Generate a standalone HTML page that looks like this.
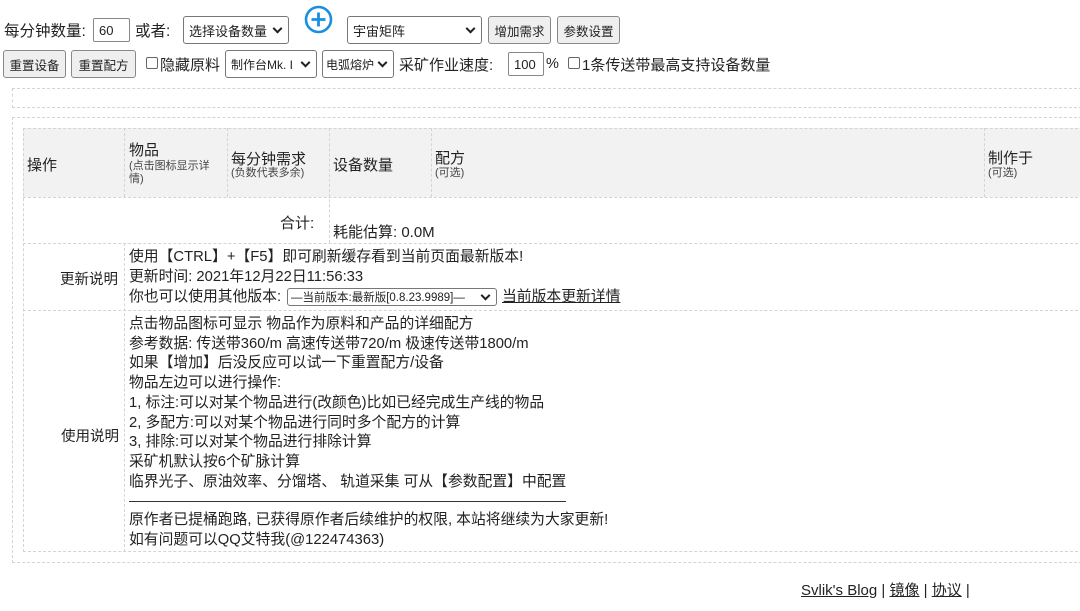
<!DOCTYPE html>
<html><head><meta charset="utf-8"><style>
*{box-sizing:border-box;margin:0;padding:0}
body{width:1080px;height:611px;overflow:hidden;background:#fff;font-family:"Liberation Sans","Noto Sans CJK SC",sans-serif;color:#222;font-size:14px;position:relative}
.a{position:absolute;white-space:nowrap}
.in{position:absolute;border:1px solid #888;border-radius:2px;background:#fff;font-size:13px;padding-left:5px;display:flex;align-items:center}
.sel{position:absolute;border:1px solid #777;border-radius:3px;background:#fff;font-size:13px;padding-left:5px;display:flex;align-items:center;overflow:hidden}
.sel:after{content:"";position:absolute;right:7px;top:50%;width:5px;height:5px;border-right:2px solid #222;border-bottom:2px solid #222;transform:translateY(-70%) rotate(45deg)}
.btn{position:absolute;border:1px solid #888;border-radius:3px;background:#efefef;font-size:12.5px;display:flex;align-items:center;justify-content:center}
.cb{position:absolute;width:12px;height:12px;border:1px solid #666;border-radius:2px;background:#fff}
.dash{position:absolute;border:1px dashed #d4d4d4}
.vl{position:absolute;border-left:1px dashed #d4d4d4}
.hl{position:absolute;border-top:1px dashed #d4d4d4}
.sm{font-size:11px;color:#444;line-height:13px}
.t{font-size:14.8px;line-height:19.7px}
</style></head><body>
<div class="a" style="left:4px;top:19px;font-size:15.5px">每分钟数量:</div>
<div class="in" style="left:93px;top:18px;width:37px;height:24px">60</div>
<div class="a" style="left:135px;top:19px;font-size:15.5px">或者:</div>
<div class="sel" style="left:183px;top:16px;width:106px;height:28px">选择设备数量</div>
<svg class="a" style="left:304px;top:5px" width="29" height="29" viewBox="0 0 29 29"><circle cx="14.5" cy="14.5" r="12.5" fill="none" stroke="#1a8fe0" stroke-width="2.6"/><path d="M14.5 7.5v14M7.5 14.5h14" stroke="#1a8fe0" stroke-width="2.8"/></svg>
<div class="sel" style="left:347px;top:16px;width:135px;height:28px">宇宙矩阵</div>
<div class="btn" style="left:488px;top:16px;width:63px;height:28px">增加需求</div>
<div class="btn" style="left:557px;top:16px;width:63px;height:28px">参数设置</div>

<div class="btn" style="left:3px;top:50px;width:63px;height:28px">重置设备</div>
<div class="btn" style="left:71px;top:50px;width:65px;height:28px">重置配方</div>
<div class="cb" style="left:146px;top:57px"></div>
<div class="a" style="left:160px;top:54px;font-size:15px">隐藏原料</div>
<div class="sel" style="left:225px;top:50px;width:92px;height:28px;font-size:12px">制作台Mk. I</div>
<div class="sel" style="left:322px;top:50px;width:72px;height:28px;padding-left:3px;font-size:12px">电弧熔炉</div>
<div class="a" style="left:399px;top:54px;font-size:15px">采矿作业速度:</div>
<div class="in" style="left:508px;top:52px;width:36px;height:24px">100</div>
<div class="a" style="left:546px;top:56px;font-size:14.5px">%</div>
<div class="cb" style="left:568px;top:57px"></div>
<div class="a" style="left:582px;top:54px;font-size:15px">1条传送带最高支持设备数量</div>

<div class="dash" style="left:12px;top:88px;width:1080px;height:20px"></div>
<div class="dash" style="left:12px;top:117px;width:1080px;height:446px"></div>
<div style="position:absolute;left:23px;top:128px;width:1070px;height:69px;background:#f2f2f2"></div>
<div class="dash" style="left:23px;top:128px;width:1070px;height:424px"></div>
<div class="hl" style="left:23px;top:197px;width:1060px"></div>
<div class="hl" style="left:23px;top:243px;width:1060px"></div>
<div class="hl" style="left:23px;top:310px;width:1060px"></div>
<div class="vl" style="left:124px;top:128px;height:69px"></div>
<div class="vl" style="left:227px;top:128px;height:69px"></div>
<div class="vl" style="left:329px;top:128px;height:115px"></div>
<div class="vl" style="left:431px;top:128px;height:69px"></div>
<div class="vl" style="left:984px;top:128px;height:69px"></div>
<div class="vl" style="left:124px;top:243px;height:309px"></div>

<div class="a" style="left:27px;top:154px;font-size:15px">操作</div>
<div class="a" style="left:129px;top:139px;font-size:15px">物品</div>
<div class="a sm" style="left:129px;top:160px;white-space:normal;width:88px">(点击图标显示详情)</div>
<div class="a" style="left:231px;top:148px;font-size:15px">每分钟需求</div>
<div class="a sm" style="left:231px;top:167px">(负数代表多余)</div>
<div class="a" style="left:333px;top:154px;font-size:15px">设备数量</div>
<div class="a" style="left:435px;top:147px;font-size:15px">配方</div>
<div class="a sm" style="left:435px;top:167px">(可选)</div>
<div class="a" style="left:988px;top:147px;font-size:15px">制作于</div>
<div class="a sm" style="left:988px;top:167px">(可选)</div>

<div class="a" style="left:280px;top:212px;font-size:15px">合计:</div>
<div class="a" style="left:333px;top:221px;font-size:15px">耗能估算: 0.0M</div>

<div class="a" style="left:60px;top:268px;font-size:14.5px">更新说明</div>
<div class="a t" style="left:129px;top:248px">使用【CTRL】+【F5】即可刷新缓存看到当前页面最新版本!</div>
<div class="a t" style="left:129px;top:268px">更新时间: 2021年12月22日11:56:33</div>
<div class="a t" style="left:129px;top:288px">你也可以使用其他版本:</div>
<div class="sel" style="left:287px;top:288px;width:210px;height:18px;font-size:11.5px;padding-left:3px">—当前版本:最新版[0.8.23.9989]—</div>
<div class="a t" style="left:502px;top:288px;text-decoration:underline">当前版本更新详情</div>

<div class="a" style="left:61px;top:425px;font-size:14.5px">使用说明</div>
<div class="a t" style="left:129px;top:315px">点击物品图标可显示 物品作为原料和产品的详细配方<br>参考数据: 传送带360/m 高速传送带720/m 极速传送带1800/m<br>如果【增加】后没反应可以试一下重置配方/设备<br>物品左边可以进行操作:<br>1, 标注:可以对某个物品进行(改颜色)比如已经完成生产线的物品<br>2, 多配方:可以对某个物品进行同时多个配方的计算<br>3, 排除:可以对某个物品进行排除计算<br>采矿机默认按6个矿脉计算<br>临界光子、原油效率、分馏塔、 轨道采集 可从【参数配置】中配置</div>
<div style="position:absolute;left:129px;top:501px;width:437px;border-top:1px solid #333"></div>
<div class="a t" style="left:129px;top:511px">原作者已提桶跑路, 已获得原作者后续维护的权限, 本站将继续为大家更新!<br>如有问题可以QQ艾特我(@122474363)</div>

<div class="a" style="left:801px;top:579px;font-size:15px"><span style="text-decoration:underline">Svlik's Blog</span> | <span style="text-decoration:underline">镜像</span> | <span style="text-decoration:underline">协议</span> |</div>
</body></html>
